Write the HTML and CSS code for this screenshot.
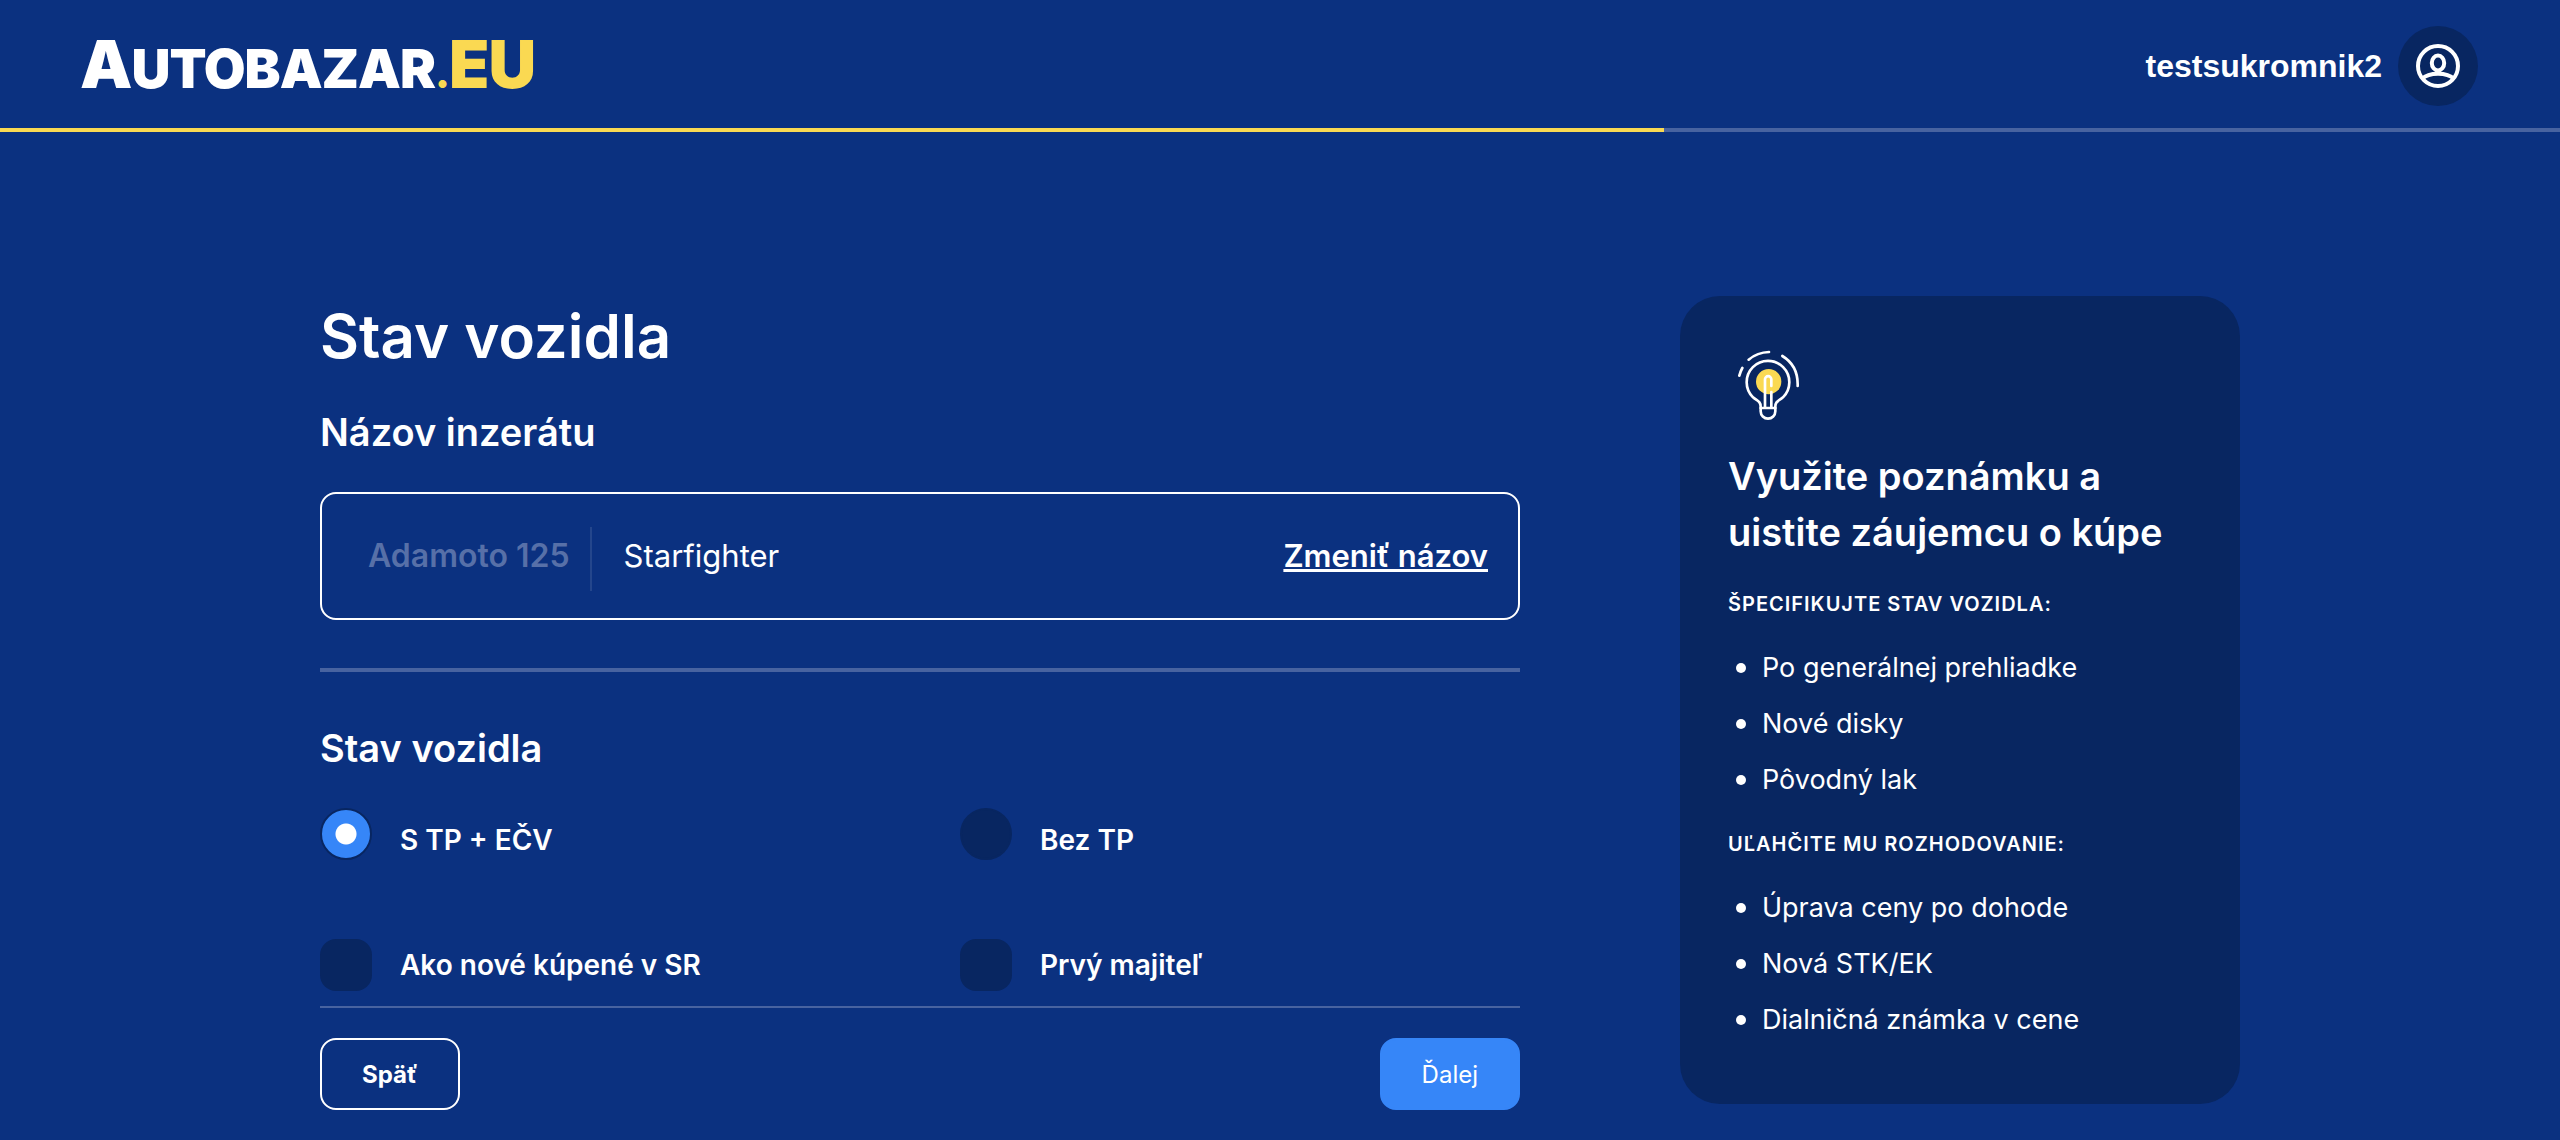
FILE: index.html
```html
<!DOCTYPE html>
<html lang="sk">
<head>
<meta charset="utf-8">
<meta name="viewport" content="width=device-width, initial-scale=1">
<title>Stav vozidla – Autobazar.EU</title>
<link rel="stylesheet" href="styles.css">
</head>
<body>
<header class="header">
  <a class="logo" href="#"><span class="logo-cap">A</span>UTOBAZAR<span class="logo-accent"><span class="logo-dot">.</span><span class="logo-cap">EU</span></span></a>
  <a class="user" href="#">
    <span>testsukromnik2</span>
    <span class="avatar">
      <svg width="44" height="44" viewBox="0 0 44 44" fill="none" stroke="#fff" stroke-width="4" aria-hidden="true">
        <circle cx="22" cy="22" r="20"/>
        <ellipse cx="22" cy="19" rx="6.2" ry="7.4"/>
        <path d="M6 35C10 31 16 29.800 22 29.800S34 31 38 35"/>
      </svg>
    </span>
  </a>
</header>
<div class="progress"><div class="progress-bar" style="width:65%"></div></div>

<main class="page">
  <form class="form">
    <h1>Stav vozidla</h1>
    <h2><label for="ad-name">Názov inzerátu</label></h2>
    <div class="name-box">
      <span class="prefix">Adamoto 125</span>
      <input class="name-input" id="ad-name" type="text" value="Starfighter">
      <a class="rename" href="#">Zmeniť názov</a>
    </div>
    <hr class="divider">
    <h2>Stav vozidla</h2>
    <div class="options">
      <label class="option option-radio"><input type="radio" name="tp" checked><span>S TP + EČV</span></label>
      <label class="option option-radio"><input type="radio" name="tp"><span>Bez TP</span></label>
      <label class="option"><input type="checkbox"><span>Ako nové kúpené v SR</span></label>
      <label class="option"><input type="checkbox"><span>Prvý majiteľ</span></label>
    </div>
    <div class="actions">
      <button class="btn btn-back" type="button">Späť</button>
      <button class="btn btn-next" type="submit">Ďalej</button>
    </div>
  </form>

  <aside class="tips">
    <svg class="bulb" width="80" height="80" viewBox="24 12 240 240" fill="none" stroke="#fff" stroke-width="8" stroke-linecap="round" stroke-linejoin="round" aria-hidden="true">
      <circle cx="146" cy="125" r="38" fill="#fad952" stroke="none"/>
      <path d="M122 204V200C122 184 112 183 99 172A64 64 0 1 1 189 172C176 183 166 184 166 200V204"/>
      <path d="M122 204H166M122 204V214A22 22 0 0 0 166 214V204"/>
      <path d="M135 202V118A9.500 9.500 0 0 1 154 118V138M154 156V202"/>
      <path d="M86 59Q112 37 147 36M187 48Q235 77 233 138M67 84Q61 95 58 107"/>
    </svg>
    <h2>Využite poznámku a uistite záujemcu o kúpe</h2>
    <h3>ŠPECIFIKUJTE STAV VOZIDLA:</h3>
    <ul>
      <li>Po generálnej prehliadke</li>
      <li>Nové disky</li>
      <li>Pôvodný lak</li>
    </ul>
    <h3>UĽAHČITE MU ROZHODOVANIE:</h3>
    <ul>
      <li>Úprava ceny po dohode</li>
      <li>Nová STK/EK</li>
      <li>Dialničná známka v cene</li>
    </ul>
  </aside>
</main>
</body>
</html>
```
FILE: styles.css
```css
* {
  box-sizing: border-box;
}

body {
  margin: 0;
  background: #0b3180;
  color: #fff;
  font-family: Inter, "Liberation Sans", sans-serif;
  font-size: 28px;
  line-height: 40px;
}

h1, h2, h3, ul {
  margin: 0;
  padding: 0;
}

a {
  color: inherit;
}

/* Header */
.header {
  display: flex;
  align-items: flex-start;
  justify-content: space-between;
  height: 128px;
  padding: 26px 82px 0 80px;
}

.logo {
  font-size: 54px;
  font-weight: 900;
  line-height: 76px;
  letter-spacing: -1px;
  text-decoration: none;
}

.logo-cap {
  font-size: 66px;
}

.logo-accent {
  color: #fad952;
}

.logo-dot {
  font-size: 40px;
}

.user {
  display: flex;
  align-items: center;
  gap: 16px;
  font-family: "Liberation Sans", Arial, sans-serif;
  font-size: 32px;
  font-weight: 700;
  text-decoration: none;
}

.avatar {
  display: grid;
  place-items: center;
  width: 80px;
  height: 80px;
  border-radius: 50%;
  background: #082661;
}

.progress {
  height: 4px;
  background: #4863a0;
}

.progress-bar {
  height: 100%;
  background: #fad952;
}

/* Page */
.page {
  display: grid;
  grid-template-columns: minmax(0, 1fr) 560px;
  gap: 160px;
  align-items: start;
  max-width: 1920px;
  margin: 0 auto;
  padding-top: 164px;
}

h1 {
  margin-bottom: 28px;
  font-size: 60px;
  font-weight: 600;
  line-height: 80px;
}

h2 {
  font-size: 38px;
  font-weight: 600;
  line-height: 56px;
}

.name-box {
  display: flex;
  align-items: center;
  height: 128px;
  margin: 32px 0 48px;
  padding: 0 30px 0 46px;
  border: 2px solid #fff;
  border-radius: 16px;
  font-size: 31px;
}

.prefix {
  height: 64px;
  margin-top: 6px;
  padding-right: 20px;
  border-right: 2px solid #24468c;
  color: #5770a8;
  font-size: 32px;
  font-weight: 600;
  line-height: 58px;
}

.name-input {
  flex: 1;
  min-width: 0;
  padding: 0 0 0 32px;
  border: 0;
  background: none;
  color: inherit;
  font: inherit;
}

.rename {
  font-weight: 600;
  text-decoration-thickness: 3px;
}

.divider {
  height: 4px;
  margin: 0 0 48px;
  border: 0;
  background: #4863a0;
}

.options {
  display: grid;
  grid-template-columns: 1fr 1fr;
  gap: 79px 80px;
  margin-top: 32px;
}

.option {
  display: flex;
  align-items: center;
  gap: 28px;
  font-weight: 600;
}

.option-radio {
  align-items: flex-end;
}

.option input {
  width: 52px;
  height: 52px;
  margin: 0;
  border-radius: 16px;
  background: #082661;
  appearance: none;
}

.option input[type="radio"] {
  border: 2px solid #082661;
  border-radius: 50%;
}

.option input[type="radio"]:checked {
  background: radial-gradient(circle, #fff 10px, #3686f8 11px);
}

.actions {
  display: flex;
  justify-content: space-between;
  margin-top: 15px;
  padding: 30px 0;
  border-top: 2px solid #4863a0;
}

.btn {
  height: 72px;
  padding: 0 40px;
  border: 2px solid #fff;
  border-radius: 16px;
  background: none;
  color: #fff;
  font-family: inherit;
  font-size: 24px;
}

.btn-back {
  font-weight: 700;
}

.btn-next {
  border-color: #3686f8;
  background: #3686f8;
}

/* Tips */
.tips {
  padding: 48px 48px 56px;
  border-radius: 40px;
  background: #082661;
}

.bulb {
  display: block;
  margin-bottom: 24px;
}

h3 {
  margin: 28px 0 20px;
  font-size: 20px;
  font-weight: 600;
  line-height: 32px;
  letter-spacing: 1px;
}

ul + h3 {
  margin-top: 20px;
}

li {
  display: flex;
  align-items: center;
  gap: 16px;
  padding-left: 8px;
  font-size: 27px;
  line-height: 56px;
}

li::before {
  content: "";
  width: 10px;
  height: 10px;
  border-radius: 50%;
  background: #fff;
}
```
